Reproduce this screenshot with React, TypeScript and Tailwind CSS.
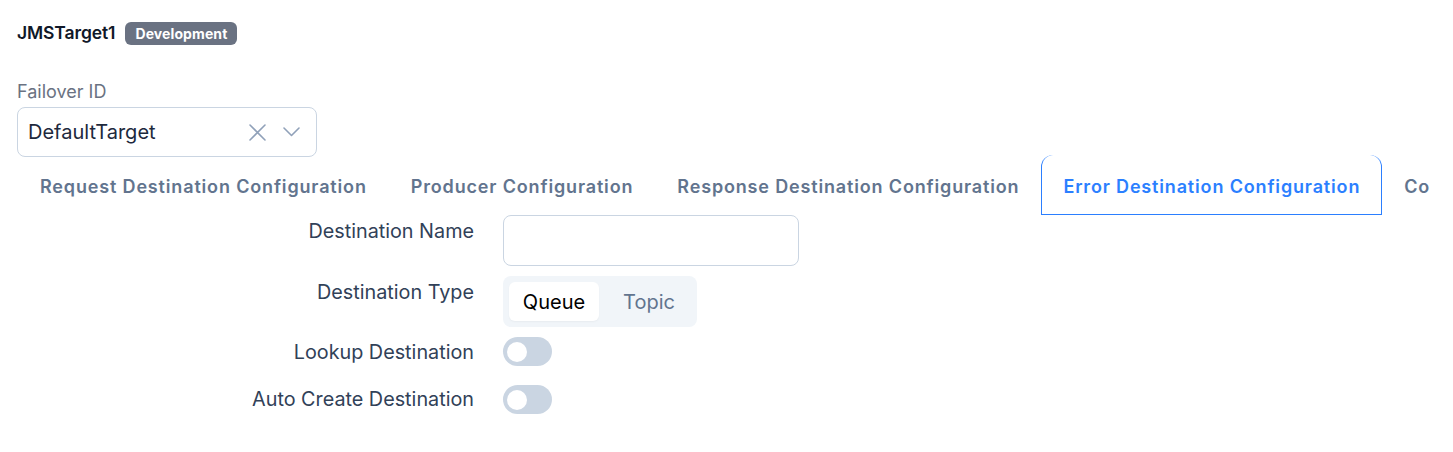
import { useState } from 'react'

const tabs = [
  'Request Destination Configuration',
  'Producer Configuration',
  'Response Destination Configuration',
  'Error Destination Configuration',
  'Consumer Configuration',
]

function Toggle({ on, onChange }: { on: boolean; onChange: (v: boolean) => void }) {
  return (
    <button
      onClick={() => onChange(!on)}
      className={`relative w-[49px] h-[29px] rounded-full transition-colors ${on ? 'bg-blue-500' : 'bg-slate-300'}`}
    >
      <span
        className={`absolute top-[4.5px] left-[4px] w-[20px] h-[20px] rounded-full bg-white transition-transform ${on ? 'translate-x-[21px]' : ''}`}
      />
    </button>
  )
}

export default function App() {
  const [activeTab, setActiveTab] = useState(3)
  const [destType, setDestType] = useState('Queue')
  const [lookup, setLookup] = useState(false)
  const [autoCreate, setAutoCreate] = useState(false)

  return (
    <div className="w-[1453px] h-[452px] overflow-hidden bg-white font-['Inter','Liberation_Sans',sans-serif]">
      <div className="pl-[17px] pt-[21px]">
        {/* Header */}
        <div className="flex items-center gap-[10px]">
          <h1 className="text-[17.5px] leading-6 font-semibold text-gray-900 tracking-[-0.1px]">JMSTarget1</h1>
          <span className="h-[23px] px-[10px] flex items-center rounded-md bg-gray-500 text-white text-[14px] font-bold tracking-[0.1px]">
            Development
          </span>
        </div>

        {/* Failover */}
        <div className="mt-[35px]">
          <label className="block text-[18px] leading-6 text-gray-500">Failover ID</label>
          <div className="mt-[3px] w-[300px] h-[50px] rounded-lg border border-slate-300 flex items-center pl-[10px] pr-[16px]">
            <span className="flex-1 text-[20px] text-slate-800">DefaultTarget</span>
            <svg width="17" height="17" viewBox="0 0 17 17" className="text-slate-400 mr-[17px]">
              <path d="M1 1L16 16M16 1L1 16" stroke="currentColor" strokeWidth="1.6" strokeLinecap="round" fill="none" />
            </svg>
            <svg width="17" height="10" viewBox="0 0 17 10" className="text-slate-400">
              <path d="M1 1L8.5 8.5L16 1" stroke="currentColor" strokeWidth="1.6" strokeLinecap="round" strokeLinejoin="round" fill="none" />
            </svg>
          </div>
        </div>

        {/* Tabs */}
        <div className="-mt-0.5 ml-[1px] w-[1412px] overflow-hidden flex whitespace-nowrap">
          {tabs.map((t, i) => (
            <button
              key={t}
              onClick={() => setActiveTab(i)}
              className={`shrink-0 h-[60px] pt-[4px] px-[21px] text-[18px] font-semibold tracking-[0.84px] border-x border-b rounded-t-xl ${
                activeTab === i ? 'border-blue-500 text-blue-500' : 'border-transparent text-slate-500'
              }`}
            >
              {t}
            </button>
          ))}
        </div>

        {/* Form */}
        <div className="grid grid-cols-[457px_1fr] gap-x-[29px] gap-y-[10px]">
          <div className="pt-[2px] text-right text-[19.8px] leading-7 text-slate-700">Destination Name</div>
          <input className="w-[296px] h-[51px] rounded-lg border border-slate-300 px-3 outline-none" />

          <div className="pt-[2px] text-right text-[19.8px] leading-7 text-slate-700">Destination Type</div>
          <div className="w-fit flex gap-[8px] p-[6px] rounded-lg bg-slate-100">
            {['Queue', 'Topic'].map((o) => (
              <button
                key={o}
                onClick={() => setDestType(o)}
                className={`h-[39px] rounded-md text-[20px] ${o === 'Queue' ? 'w-[90px]' : 'w-[84px]'} ${
                  destType === o ? 'bg-white text-black shadow-[0_1px_2px_rgba(0,0,0,0.04)]' : 'text-slate-500'
                }`}
              >
                {o}
              </button>
            ))}
          </div>

          <div className="pt-[1px] text-right text-[19.8px] leading-7 text-slate-700">Lookup Destination</div>
          <div className="h-[38px]">
            <Toggle on={lookup} onChange={setLookup} />
          </div>

          <div className="text-right text-[19.8px] leading-7 text-slate-700">Auto Create Destination</div>
          <div>
            <Toggle on={autoCreate} onChange={setAutoCreate} />
          </div>
        </div>
      </div>
    </div>
  )
}
